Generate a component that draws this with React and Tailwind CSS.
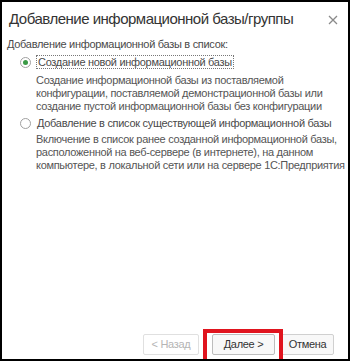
export default function App() {
  return (
    <div className="relative w-[350px] h-[361px] bg-white border-2 border-black overflow-hidden" style={{ fontFamily: '"Liberation Sans", Arial, sans-serif' }}>
      <div className="flex items-start justify-between pl-[7px] pr-[10px] pt-[7px]">
        <div className="text-[15px] leading-[20px] tracking-[-0.5px] text-[#333] whitespace-nowrap">Добавление информационной базы/группы</div>
        <svg width="10" height="10" viewBox="0 0 10 10" className="mt-[6px]">
          <path d="M1 1L9 9M9 1L1 9" stroke="#8a8a8a" strokeWidth="1.3" />
        </svg>
      </div>
      <div className="pl-[5px] pt-[9px] text-[11px] leading-[13px] tracking-[-0.3px] text-[#4a4a4a] whitespace-nowrap">
        <div>Добавление информационной базы в список:</div>
        <div className="flex items-center mt-[4px] pl-[13px]">
          <div className="w-[11px] h-[11px] rounded-full border border-[#a0a0a0] flex items-center justify-center">
            <div className="w-[5px] h-[5px] rounded-full bg-[#3a9a45]"></div>
          </div>
          <div className="ml-[5px] border border-dotted border-[#777] px-[1px] leading-[12px]">Создание новой информационной базы</div>
        </div>
        <div className="pl-[29px] mt-[5px] text-[#555]">
          <div>Создание информационной базы из поставляемой</div>
          <div>конфигурации, поставляемой демонстрационной базы или</div>
          <div>создание пустой информационной базы без конфигурации</div>
        </div>
        <div className="flex items-center mt-[3px] pl-[13px]">
          <div className="w-[11px] h-[11px] rounded-full border border-[#a0a0a0]"></div>
          <div className="ml-[6px] leading-[14px]">Добавление в список существующей информационной базы</div>
        </div>
        <div className="pl-[29px] mt-[3px] text-[#555]">
          <div>Включение в список ранее созданной информационной базы,</div>
          <div>расположенной на веб-сервере (в интернете), на данном</div>
          <div>компьютере, в локальной сети или на сервере 1С:Предприятия</div>
        </div>
      </div>
      <div className="absolute left-0 right-0 bottom-[4px] flex justify-end pr-[14px] text-[11px] tracking-[-0.3px]">
        <div className="w-[56px] h-[21px] border border-[#e0e0e0] rounded-[2px] flex items-center justify-center text-[#b5b5b5] bg-white">&lt; Назад</div>
        <div className="ml-[13px] w-[63px] h-[21px] border border-[#bdbdbd] rounded-[2px] flex items-center justify-center text-[#333] bg-[#f8f8f8]">Далее &gt;</div>
        <div className="ml-[6px] w-[53px] h-[21px] border border-[#d0d0d0] rounded-[2px] flex items-center justify-center text-[#333] bg-[#f8f8f8]">Отмена</div>
      </div>
      <div className="absolute left-[201px] top-[327px] w-[80px] h-[40px] border-[4px] border-[#e0141e]"></div>
    </div>
  );
}
